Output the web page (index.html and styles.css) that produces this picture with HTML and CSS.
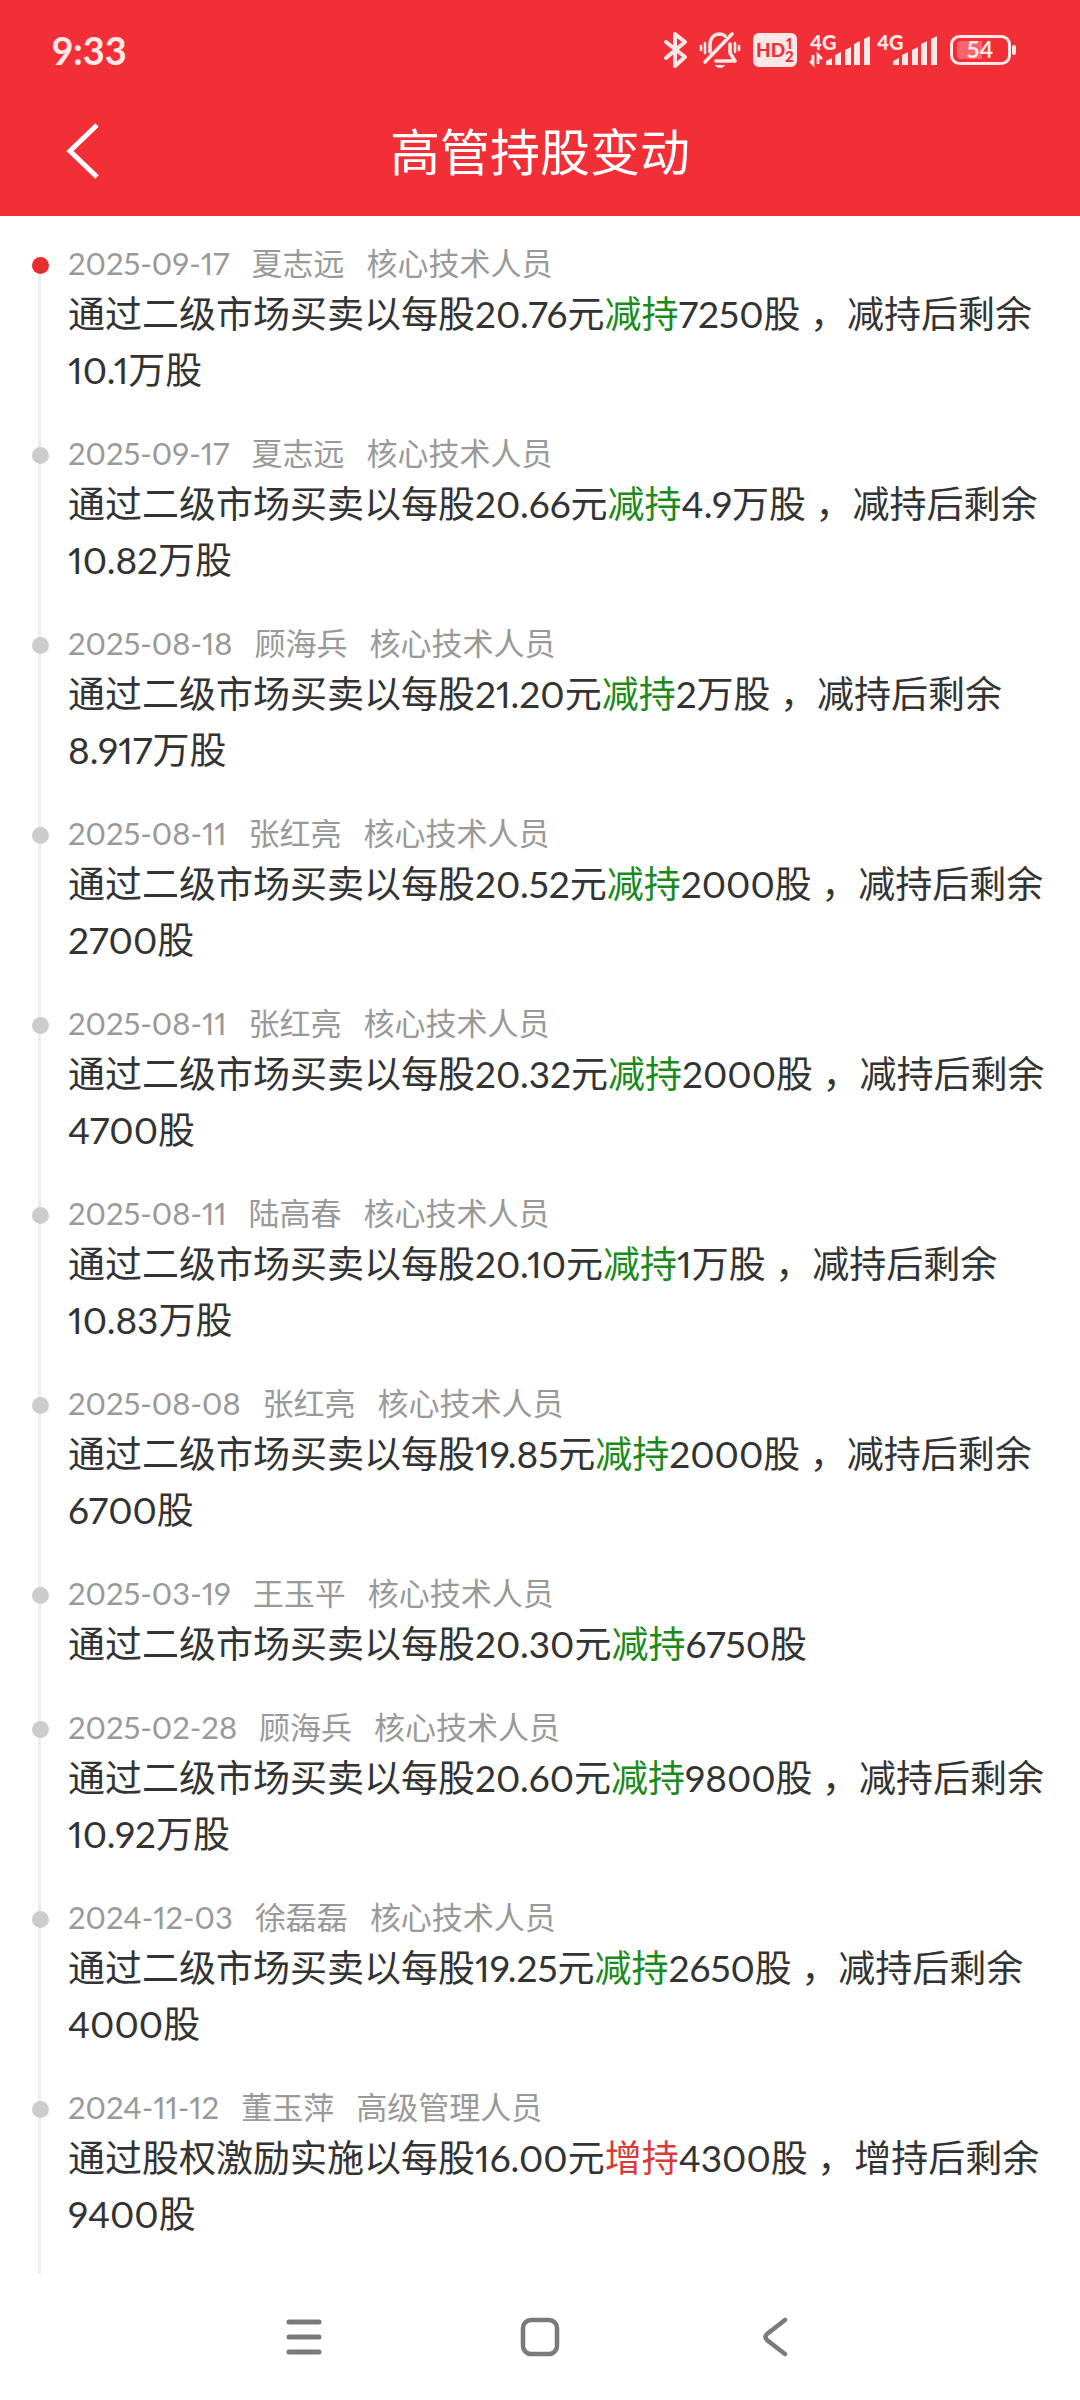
FILE: index.html
```
<!DOCTYPE html>
<html lang="zh-CN">
<head>
  <meta charset="UTF-8">
  <meta name="viewport" content="width=device-width, initial-scale=1">
  <title>高管持股变动</title>
  <link rel="stylesheet" href="styles.css">
</head>
<body>
  <header class="header">
    <div class="status-bar">
      <span class="time">9:33</span>
      <div class="status-icons">
        <!-- bluetooth -->
        <svg class="icon-bt" width="24" height="38" viewBox="0 0 24 38">
          <path d="M3 11 L22 26 L12 35 V3 L22 11 L3 27" fill="none" stroke="currentColor" stroke-width="4" stroke-linejoin="round" stroke-linecap="round"/>
        </svg>
        <!-- muted bell -->
        <svg class="icon-bell" width="42" height="38" viewBox="0 0 42 38">
          <g fill="none" stroke="currentColor" stroke-width="3.6" stroke-linecap="round" stroke-linejoin="round">
            <path d="M6 31 L33 3"/>
            <path d="M11 21 V14 C11 7 15 3 21 3 C23 3 25 4 26 5"/>
            <path d="M31 13 V22 L36 30 H17"/>
            <path d="M6 12 V22 M2 15 V19 M36 12 V21 M40 15 V19" stroke-width="2.6"/>
          </g>
          <path d="M16 34 H26 C25 36 23 37 21 37 C19 37 17 36 16 34 Z" fill="currentColor"/>
        </svg>
        <!-- HD voice -->
        <svg class="icon-hd" width="44" height="34" viewBox="0 0 44 34">
          <rect width="44" height="34" rx="6" fill="currentColor"/>
          <text class="hd-text" x="3" y="24">HD</text>
          <text class="hd-num" x="33" y="16">1</text>
          <text class="hd-num" x="32" y="29">2</text>
        </svg>
        <!-- sim 1 -->
        <svg class="icon-sim" width="62" height="38" viewBox="0 0 62 38">
          <text class="net" x="1" y="19">4G</text>
          <path d="M4 24 V33 L1 30 M9 33 V24 L13 28" fill="none" stroke="currentColor" stroke-width="2.8"/>
          <path d="M17 34 V30 L23 27 V34 Z M26 34 V24 L32 21 V34 Z M36 34 V19 L42 16 V34 Z M45 34 V13 L51 10 V34 Z M55 34 V8 L61 5 V34 Z" fill="currentColor"/>
        </svg>
        <!-- sim 2 -->
        <svg class="icon-sim" width="62" height="38" viewBox="0 0 62 38">
          <text class="net" x="1" y="19">4G</text>
          <path d="M17 34 V30 L23 27 V34 Z M26 34 V24 L32 21 V34 Z M36 34 V19 L42 16 V34 Z M45 34 V13 L51 10 V34 Z M55 34 V8 L61 5 V34 Z" fill="currentColor"/>
        </svg>
        <!-- battery -->
        <svg class="icon-battery" width="66" height="30" viewBox="0 0 66 30">
          <rect x="1.5" y="1.5" width="58" height="27" rx="8" fill="none" stroke="currentColor" stroke-width="3"/>
          <path d="M11 6 H32 V24 H11 Q7 24 7 20 V10 Q7 6 11 6 Z" fill="currentColor" opacity="0.3"/>
          <rect x="62" y="10" width="4" height="10" rx="2" fill="currentColor"/>
          <text class="level" x="30" y="23">54</text>
        </svg>
      </div>
    </div>
    <div class="title-bar">
      <button class="back-btn" type="button" aria-label="返回">
        <svg width="34" height="58" viewBox="0 0 34 58">
          <path d="M32 2 L5 28 L32 54" fill="none" stroke="currentColor" stroke-width="5"/>
        </svg>
      </button>
      <h1>高管持股变动</h1>
    </div>
  </header>

  <main>
    <ol class="timeline">
      <li class="item active">
        <div class="meta"><time>2025-09-17</time><span>夏志远</span><span>核心技术人员</span></div>
        <p>通过二级市场买卖以每股20.76元<b class="down">减持</b>7250股 ，减持后剩余10.1万股</p>
      </li>
      <li class="item">
        <div class="meta"><time>2025-09-17</time><span>夏志远</span><span>核心技术人员</span></div>
        <p>通过二级市场买卖以每股20.66元<b class="down">减持</b>4.9万股 ，减持后剩余10.82万股</p>
      </li>
      <li class="item">
        <div class="meta"><time>2025-08-18</time><span>顾海兵</span><span>核心技术人员</span></div>
        <p>通过二级市场买卖以每股21.20元<b class="down">减持</b>2万股 ，减持后剩余8.917万股</p>
      </li>
      <li class="item">
        <div class="meta"><time>2025-08-11</time><span>张红亮</span><span>核心技术人员</span></div>
        <p>通过二级市场买卖以每股20.52元<b class="down">减持</b>2000股 ，减持后剩余2700股</p>
      </li>
      <li class="item">
        <div class="meta"><time>2025-08-11</time><span>张红亮</span><span>核心技术人员</span></div>
        <p>通过二级市场买卖以每股20.32元<b class="down">减持</b>2000股 ，减持后剩余4700股</p>
      </li>
      <li class="item">
        <div class="meta"><time>2025-08-11</time><span>陆高春</span><span>核心技术人员</span></div>
        <p>通过二级市场买卖以每股20.10元<b class="down">减持</b>1万股 ，减持后剩余10.83万股</p>
      </li>
      <li class="item">
        <div class="meta"><time>2025-08-08</time><span>张红亮</span><span>核心技术人员</span></div>
        <p>通过二级市场买卖以每股19.85元<b class="down">减持</b>2000股 ，减持后剩余6700股</p>
      </li>
      <li class="item">
        <div class="meta"><time>2025-03-19</time><span>王玉平</span><span>核心技术人员</span></div>
        <p>通过二级市场买卖以每股20.30元<b class="down">减持</b>6750股</p>
      </li>
      <li class="item">
        <div class="meta"><time>2025-02-28</time><span>顾海兵</span><span>核心技术人员</span></div>
        <p>通过二级市场买卖以每股20.60元<b class="down">减持</b>9800股 ，减持后剩余10.92万股</p>
      </li>
      <li class="item">
        <div class="meta"><time>2024-12-03</time><span>徐磊磊</span><span>核心技术人员</span></div>
        <p>通过二级市场买卖以每股19.25元<b class="down">减持</b>2650股 ，减持后剩余4000股</p>
      </li>
      <li class="item">
        <div class="meta"><time>2024-11-12</time><span>董玉萍</span><span>高级管理人员</span></div>
        <p>通过股权激励实施以每股16.00元<b class="up">增持</b>4300股 ，增持后剩余9400股</p>
      </li>
    </ol>
  </main>

  <nav class="nav-bar">
    <button type="button" aria-label="最近任务">
      <svg width="40" height="40" viewBox="0 0 40 40">
        <path d="M5 5 H35 M5 20 H35 M5 35 H35" fill="none" stroke="currentColor" stroke-width="5" stroke-linecap="round"/>
      </svg>
    </button>
    <button type="button" aria-label="主屏幕">
      <svg width="40" height="40" viewBox="0 0 40 40">
        <rect x="3" y="3" width="34" height="34" rx="8" fill="none" stroke="currentColor" stroke-width="4.5"/>
      </svg>
    </button>
    <button type="button" aria-label="返回上一页">
      <svg width="40" height="40" viewBox="0 0 40 40">
        <path d="M29 3 L11 17 Q8 20 11 23 L29 37" fill="none" stroke="currentColor" stroke-width="4.5" stroke-linecap="round"/>
      </svg>
    </button>
  </nav>
</body>
</html>
```

FILE: styles.css
```
* {
  box-sizing: border-box;
}

body {
  margin: 0;
  background-color: #fff;
  color: #333;
  font-family: Lato, "Noto Sans CJK SC", sans-serif;
  font-variant-numeric: proportional-nums;
}

button {
  display: flex;
  align-items: center;
  justify-content: center;
  padding: 0;
  border: none;
  background: none;
  cursor: pointer;
}

.header {
  background-color: #f22f37;
  color: #fff;
}

.status-bar {
  display: flex;
  align-items: center;
  justify-content: space-between;
  height: 88px;
  padding: 12px 64px 0 52px;
  color: #ffe6e7;
}

.time {
  font-size: 38px;
  line-height: 46px;
  font-weight: bold;
}

.status-icons {
  display: flex;
  align-items: center;
  gap: 12px;
}

.icon-sim + .icon-sim {
  margin-left: -7px;
}

.status-icons text {
  font-family: Lato, sans-serif;
  font-weight: 900;
}

.hd-text {
  font-size: 19px;
  fill: #f22f37;
}

.hd-num {
  font-size: 15px;
  fill: #f22f37;
}

.net {
  font-size: 20px;
  fill: currentColor;
}

.status-icons .level {
  font-size: 23px;
  font-weight: bold;
  fill: currentColor;
  text-anchor: middle;
}

.title-bar {
  display: grid;
  grid-template-columns: 100px 1fr 100px;
  align-items: center;
  height: 128px;
  padding: 0 32px;
}

.back-btn {
  height: 100px;
  color: #fff;
}

h1 {
  margin: 0;
  font-size: 50px;
  line-height: 64px;
  font-weight: normal;
  text-align: center;
}

.timeline {
  margin: 0;
  padding: 24px 28px 0 38px;
  list-style: none;
}

/* grey rail on the left, one piece per record */
.item {
  position: relative;
  padding: 0 0 32px 27px;
  border-left: 3px solid #eee;
}

.item::before {
  content: "";
  position: absolute;
  left: -9px;
  top: 17px;
  width: 17px;
  height: 17px;
  border-radius: 50%;
  background-color: #ccc;
}

/* the rail starts at the newest record's dot */
.item.active {
  border-image: linear-gradient(#fff 24px, #eee 24px) 1;
}

.item.active::before {
  background-color: #e62e2e;
}

.meta {
  display: flex;
  gap: 22px;
  font-size: 31px;
  line-height: 46px;
  color: #999;
}

.item p {
  margin: 0;
  font-size: 37px;
  line-height: 56px;
}

.item b {
  font-weight: normal;
}

.down {
  color: #1a8a1a;
}

.up {
  color: #d93a3a;
}

.nav-bar {
  display: flex;
  justify-content: center;
  gap: 116px;
  color: #7a7a7a;
}

.nav-bar button {
  width: 120px;
  height: 126px;
  color: inherit;
}
```
